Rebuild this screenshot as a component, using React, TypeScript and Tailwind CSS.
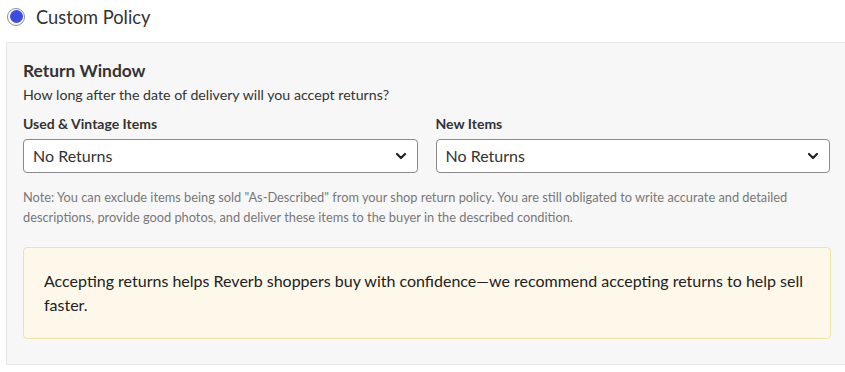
import React from "react";

function Chevron() {
  return (
    <svg width="12" height="12" viewBox="0 0 12 12" className="shrink-0">
      <path d="M2 4l4 4 4-4" fill="none" stroke="#222" strokeWidth="2.2" strokeLinecap="round" strokeLinejoin="round" />
    </svg>
  );
}

function Select({ label }: { label: string }) {
  return (
    <div className="flex flex-col flex-1 min-w-0">
      <div className="text-[14px] leading-[20px] font-bold text-[#333]">{label}</div>
      <div className="mt-[5px] h-[34px] bg-white border border-[#8a8a8a] rounded-[4px] flex items-center justify-between pl-[9px] pr-[10px]">
        <span className="text-[16px] text-[#333]">No Returns</span>
        <Chevron />
      </div>
    </div>
  );
}

export default function App() {
  return (
    <div className="w-[845px] h-[372px] bg-white overflow-hidden" style={{ fontFamily: "Lato, 'Noto Sans', sans-serif" }}>
      <div className="flex items-center h-[33px] pl-[7px]">
        <div className="w-[18px] h-[18px] rounded-full border border-[#8c8c8c] bg-white flex items-center justify-center">
          <div className="w-[13px] h-[13px] rounded-full bg-[#3a4de0]" />
        </div>
        <span className="ml-[11px] text-[18.3px] text-[#333] leading-[24px]">Custom Policy</span>
      </div>
      <div className="mt-[9px] ml-[6px] w-[841px] h-[323px] bg-[#f7f7f7] border border-[#e6e6e6] pt-[16px] pl-[16px] pr-[16px] pb-[24px]">
        <div className="text-[17.4px] leading-[24px] font-bold text-[#333]">Return Window</div>
        <div className="mt-[2px] text-[14.2px] leading-[20px] text-[#333]">How long after the date of delivery will you accept returns?</div>
        <div className="mt-[9px] flex gap-[18px]">
          <Select label="Used & Vintage Items" />
          <Select label="New Items" />
        </div>
        <div className="mt-[14px] text-[12.8px] leading-[20px] text-[#777]">
          Note: You can exclude items being sold "As-Described" from your shop return policy. You are still obligated to write accurate and detailed descriptions, provide good photos, and deliver these items to the buyer in the described condition.
        </div>
        <div className="mt-[20px] w-[808px] bg-[#fdf8ea] border border-[#f4e2a2] rounded-[4px] py-[21px] pl-[20px] pr-[20px]">
          <div className="text-[16px] leading-[24px] text-[#222]">
            Accepting returns helps Reverb shoppers buy with confidence—we recommend accepting returns to help sell faster.
          </div>
        </div>
      </div>
    </div>
  );
}
